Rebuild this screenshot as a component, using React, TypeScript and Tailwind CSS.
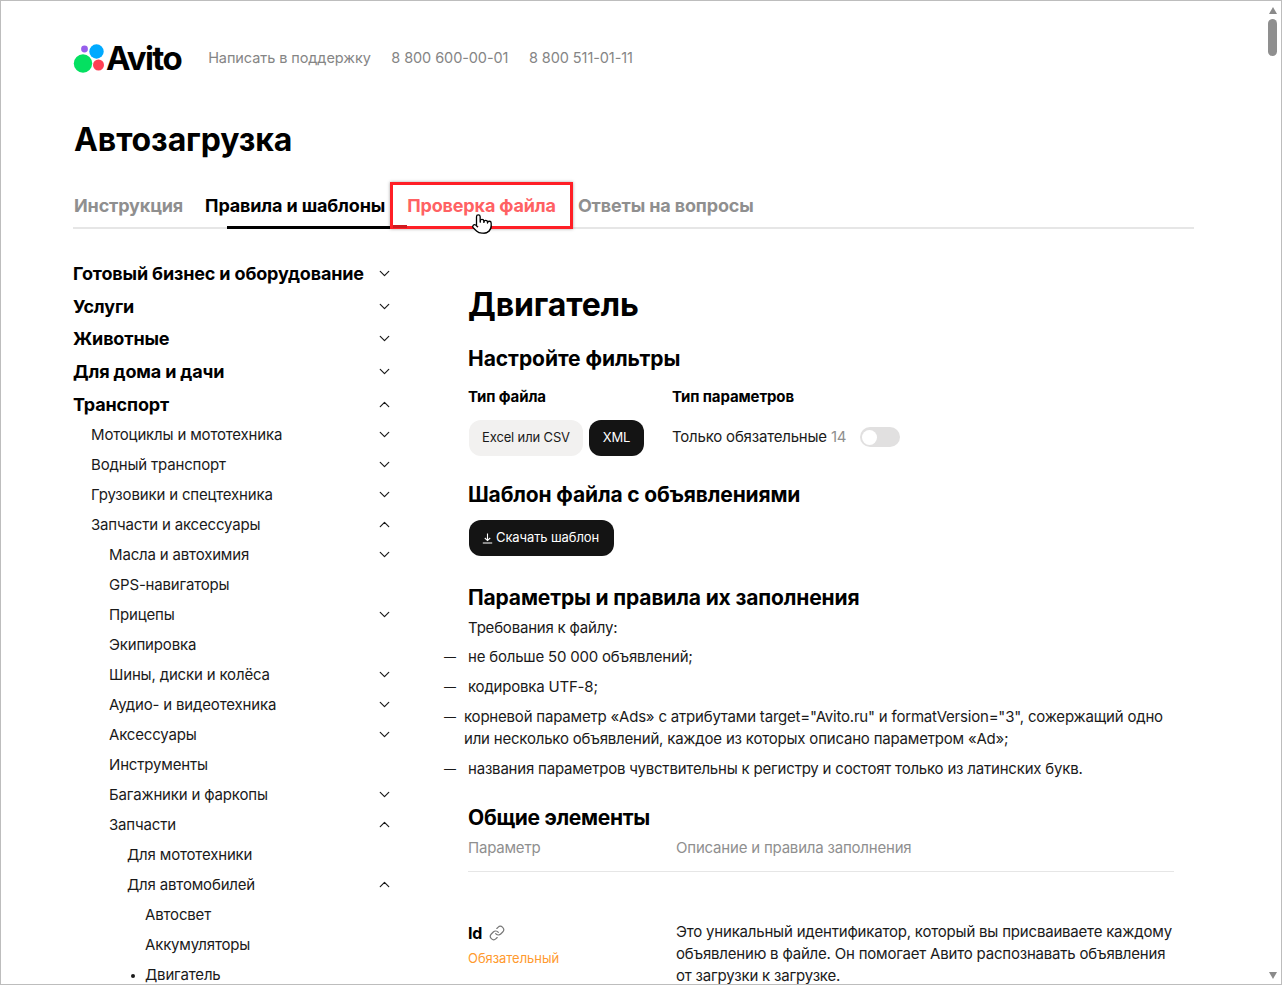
import React from "react";
import { ChevronDown, ChevronUp, Link, Pointer } from "lucide-react";

type Row = { t: string; lvl: number; c?: "d" | "u"; dot?: boolean };
const top: Row[] = [
  { t: "Готовый бизнес и оборудование", lvl: 0, c: "d" },
  { t: "Услуги", lvl: 0, c: "d" },
  { t: "Животные", lvl: 0, c: "d" },
  { t: "Для дома и дачи", lvl: 0, c: "d" },
  { t: "Транспорт", lvl: 0, c: "u" },
];
const sub: Row[] = [
  { t: "Мотоциклы и мототехника", lvl: 1, c: "d" },
  { t: "Водный транспорт", lvl: 1, c: "d" },
  { t: "Грузовики и спецтехника", lvl: 1, c: "d" },
  { t: "Запчасти и аксессуары", lvl: 1, c: "u" },
  { t: "Масла и автохимия", lvl: 2, c: "d" },
  { t: "GPS-навигаторы", lvl: 2 },
  { t: "Прицепы", lvl: 2, c: "d" },
  { t: "Экипировка", lvl: 2 },
  { t: "Шины, диски и колёса", lvl: 2, c: "d" },
  { t: "Аудио- и видеотехника", lvl: 2, c: "d" },
  { t: "Аксессуары", lvl: 2, c: "d" },
  { t: "Инструменты", lvl: 2 },
  { t: "Багажники и фаркопы", lvl: 2, c: "d" },
  { t: "Запчасти", lvl: 2, c: "u" },
  { t: "Для мототехники", lvl: 3 },
  { t: "Для автомобилей", lvl: 3, c: "u" },
  { t: "Автосвет", lvl: 4 },
  { t: "Аккумуляторы", lvl: 4 },
  { t: "Двигатель", lvl: 4, dot: true },
];
const pad = ["pl-0", "pl-[18px]", "pl-[36px]", "pl-[54px]", "pl-[72px]"];

function Chev({ c }: { c?: "d" | "u" }) {
  if (c === "d") return <ChevronDown size={17} strokeWidth={1.7} className="text-[#1a1a1a]" />;
  if (c === "u") return <ChevronUp size={17} strokeWidth={1.7} className="text-[#1a1a1a]" />;
  return null;
}

function Bullet({ children, wide }: { children: React.ReactNode; wide?: boolean }) {
  return (
    <li className="flex leading-[22px]">
      <span className="w-[20px] shrink-0 text-[12px] text-[#1a1a1a]">—</span>
      <span className={wide ? "pl-0" : "pl-[4px]"}>{children}</span>
    </li>
  );
}

export default function App() {
  return (
    <div className="relative h-[985px] w-[1282px] overflow-hidden border border-[#bdbdbd] bg-white font-['Inter',sans-serif] text-[#000]">
      {/* header */}
      <header className="flex h-[77px] items-end pl-[72px]">
        <div className="flex h-[40px] items-center">
          <svg width="32" height="29" viewBox="0 0 32 29" className="mr-px">
            <circle cx="10" cy="19.5" r="9.2" fill="#04e061" />
            <circle cx="23.5" cy="7.5" r="7.2" fill="#0af" />
            <circle cx="25.5" cy="21" r="5.5" fill="#ff4053" />
            <circle cx="11.5" cy="5" r="3.4" fill="#965eeb" />
          </svg>
          <span className="text-[33px] font-bold leading-none tracking-[-1.6px]">Avito</span>
          <div className="ml-[27px] flex gap-[20.5px] text-[14.5px] tracking-[-0.08px] text-[#858585]">
            <span>Написать в поддержку</span>
            <span>8 800 600-00-01</span>
            <span>8 800 511-01-11</span>
          </div>
        </div>
      </header>

      <div className="pl-[72px] pt-[37px]">
        <h1 className="pl-px text-[32px] font-bold leading-[50px] tracking-[-0.1px]">Автозагрузка</h1>

        {/* tabs */}
        <nav className="relative mt-[22px] flex h-[42px] w-[1121px] gap-[22px] border-b-2 border-[#e6e6e6] pl-px pt-[5px] text-[18px] font-bold leading-[28px] tracking-[-0.15px]">
          <span className="text-[#8f8f8f]">Инструкция</span>
          <span className="text-black">Правила и шаблоны</span>
          <span className="text-[#ff6163]">Проверка файла</span>
          <span className="text-[#8f8f8f]">Ответы на вопросы</span>
          <span className="absolute -bottom-[2px] left-[154px] h-[3px] w-[180px] bg-black" />
          <span className="absolute -top-[5px] left-[317px] h-[47px] w-[183px] border-[3px] border-[#ff1f26] shadow-[0_0_3px_rgba(0,0,0,0.35)]" />
          <span className="absolute -bottom-[1px] left-[320px] h-[3px] w-[14px] bg-[#cf1a1f]" />
          <Pointer size={22} strokeWidth={1.4} fill="#fff" className="absolute left-[398px] top-[26px] text-black" />
        </nav>

        <div className="mt-[28px] flex">
          {/* sidebar */}
          <aside className="w-[320px] shrink-0">
            {top.map((r) => (
              <div key={r.t} className="flex h-[32.75px] items-center justify-between text-[18px] font-bold tracking-[-0.15px]">
                <span>{r.t}</span>
                <Chev c={r.c} />
              </div>
            ))}
            <div className="-mt-px">
              {sub.map((r) => (
                <div key={r.t} className={`relative flex h-[30px] items-center justify-between text-[15px] tracking-[-0.17px] text-[#1a1a1a] ${pad[r.lvl]}`}>
                  <span>{r.t}</span>
                  {r.dot && <span className="absolute left-[58px] top-[14px] h-[4px] w-[4px] rounded-full bg-[#1a1a1a]" />}
                  <Chev c={r.c} />
                </div>
              ))}
            </div>
          </aside>

          {/* main */}
          <main className="ml-[75px] w-[706px] text-[15px] tracking-[-0.2px] text-[#1a1a1a]">
            <h2 className="mt-[26px] text-[32px] font-bold leading-[44px] tracking-[-0.1px] text-black">Двигатель</h2>
            <h3 className="mt-[18px] text-[21px] font-bold leading-[28px] tracking-[-0.05px] text-black">Настройте фильтры</h3>

            <div className="mt-[13px] flex">
              <div className="w-[204px]">
                <div className="text-[15px] font-bold leading-[22px] tracking-[-0.12px] text-black">Тип файла</div>
                <div className="ml-px mt-[12px] flex gap-[6px] text-[13px] tracking-[-0.15px]">
                  <span className="flex h-[36px] w-[114px] items-center justify-center rounded-[12px] bg-[#f2f1f0]">Excel или CSV</span>
                  <span className="flex h-[36px] w-[55px] items-center justify-center rounded-[12px] bg-[#141414] text-white">XML</span>
                </div>
              </div>
              <div>
                <div className="text-[15px] font-bold leading-[22px] tracking-[-0.12px] text-black">Тип параметров</div>
                <div className="mt-[11px] flex h-[36px] items-center">
                  <span>Только обязательные</span>
                  <span className="ml-[4px] text-[#8f8f8f]">14</span>
                  <span className="ml-[14px] flex h-[20px] w-[40px] items-center rounded-full bg-[#e1e0e0] pl-[2px]">
                    <span className="h-[15px] w-[15px] rounded-full bg-white" />
                  </span>
                </div>
              </div>
            </div>

            <h3 className="mt-[25px] text-[21px] font-bold leading-[28px] tracking-[-0.15px] text-black">Шаблон файла с объявлениями</h3>
            <button className="ml-px mt-[11px] flex h-[36px] w-[145px] items-center justify-start gap-[3px] rounded-[12px] bg-[#141414] pl-[13px] text-[13px] tracking-[-0.1px] text-white">
              <svg width="11" height="11" viewBox="0 0 11 11" fill="none" stroke="currentColor" strokeWidth="1.1">
                <path d="M5.5 0.5V7.5M2.8 5L5.5 7.6L8.2 5M0.8 10H10.2" />
              </svg>
              Скачать шаблон
            </button>

            <h3 className="mt-[28px] text-[21px] font-bold leading-[28px] tracking-[-0.15px] text-black">Параметры и правила их заполнения</h3>
            <p className="mt-[5px] leading-[22px]">Требования к файлу:</p>
            <ul className="relative -ml-[24px] mt-[7px] flex flex-col gap-[8px]">
              <Bullet>не больше 50 000 объявлений;</Bullet>
              <Bullet>кодировка UTF-8;</Bullet>
              <Bullet wide>
                корневой параметр «Ads» с атрибутами target="Avito.ru" и formatVersion="3", сожержащий одно или несколько объявлений, каждое из которых описано параметром «Ad»;
              </Bullet>
              <Bullet>названия параметров чувствительны к регистру и состоят только из латинских букв.</Bullet>
            </ul>

            <h3 className="mt-[24px] text-[21px] font-bold leading-[28px] tracking-[-0.3px] text-black">Общие элементы</h3>
            <div className="mt-[5px] flex h-[35px] border-b border-[#e6e6e6] text-[#8f8f8f]">
              <span className="w-[208px] leading-[22px]">Параметр</span>
              <span className="leading-[22px]">Описание и правила заполнения</span>
            </div>
            <div className="mt-[49px] flex">
              <div className="w-[208px] pt-[2px]">
                <div className="flex items-center gap-[7px] text-[16px] font-bold leading-[20px] text-black">
                  Id <Link size={16} strokeWidth={1.8} className="text-[#777]" />
                </div>
                <div className="mt-[6px] text-[13px] tracking-[-0.05px] text-[#ff9a2e]">Обязательный</div>
              </div>
              <p className="w-[498px] leading-[22px]">
                Это уникальный идентификатор, который вы присваиваете каждому объявлению в файле. Он помогает Авито распознавать объявления от загрузки к загрузке.
              </p>
            </div>
          </main>
        </div>
      </div>

      {/* window scrollbar */}
      <div className="absolute bottom-0 right-0 top-0 flex w-[17px] flex-col items-center">
        <span className="mt-[6px] h-0 w-0 border-x-[4.5px] border-b-[7px] border-x-transparent border-b-[#8a8a8a]" />
        <span className="mt-[5px] h-[37px] w-[9px] rounded-full bg-[#8f8f8f]" />
        <span className="mb-[5px] mt-auto h-0 w-0 border-x-[4.5px] border-t-[7px] border-x-transparent border-t-[#8a8a8a]" />
      </div>
    </div>
  );
}
